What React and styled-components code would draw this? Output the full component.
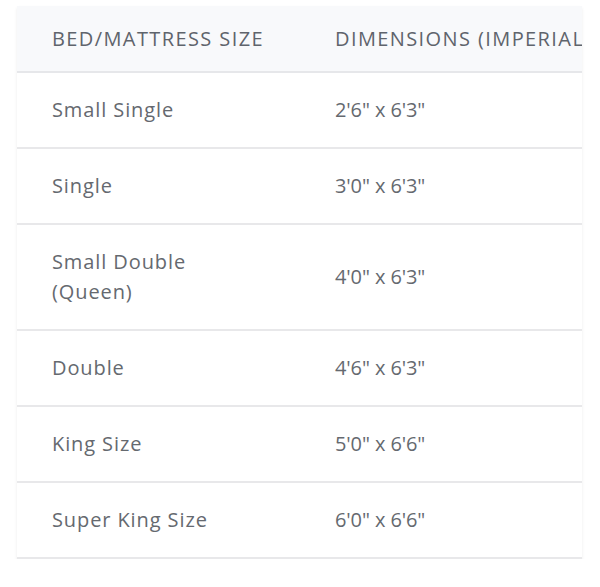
import styled, { createGlobalStyle } from "styled-components";

const GlobalStyle = createGlobalStyle`
  html, body {
    margin: 0;
    padding: 0;
    background: #ffffff;
  }
  body {
    font-family: "Open Sans", "Liberation Sans", sans-serif;
  }
`;

const Page = styled.div`
  padding: 6px 18px 0 17px;
`;

const TableWrap = styled.div`
  overflow: hidden;
  box-shadow: 0 2px 3px rgba(0, 0, 0, 0.08);
`;

const Table = styled.table`
  border-collapse: collapse;
  width: 620px;
  table-layout: fixed;
  color: #62666e;
`;

const HeadRow = styled.tr`
  background: #f8f9fb;
  border-bottom: 2px solid #e6e7ea;
`;

const HeadCell = styled.th`
  box-sizing: border-box;
  width: ${(p) => (p.$first ? "283px" : "auto")};
  height: 66px;
  padding: 0 0 0 35px;
  text-align: left;
  font-size: 20px;
  font-weight: 500;
  letter-spacing: 1.4px;
  text-transform: uppercase;
  white-space: nowrap;
  overflow: hidden;
  color: #5f646c;
`;

const Row = styled.tr`
  border-bottom: 2px solid #e8e8ea;
`;

const Cell = styled.td`
  padding: 22px 35px;
  font-size: 20px;
  line-height: 30px;
  letter-spacing: ${(p) => (p.$numeric ? "-0.1px" : "0.9px")};
  vertical-align: middle;
  color: #65696f;
`;

const rows = [
  ["Small Single", "2'6\" x 6'3\""],
  ["Single", "3'0\" x 6'3\""],
  ["Small Double (Queen)", "4'0\" x 6'3\""],
  ["Double", "4'6\" x 6'3\""],
  ["King Size", "5'0\" x 6'6\""],
  ["Super King Size", "6'0\" x 6'6\""],
];

export default function App() {
  return (
    <>
      <GlobalStyle />
      <Page>
        <TableWrap>
          <Table>
            <thead>
              <HeadRow>
                <HeadCell $first>Bed/Mattress Size</HeadCell>
                <HeadCell>Dimensions (Imperial)</HeadCell>
              </HeadRow>
            </thead>
            <tbody>
              {rows.map((r) => (
                <Row key={r[0]}>
                  <Cell>{r[0]}</Cell>
                  <Cell $numeric>{r[1]}</Cell>
                </Row>
              ))}
            </tbody>
          </Table>
        </TableWrap>
      </Page>
    </>
  );
}
